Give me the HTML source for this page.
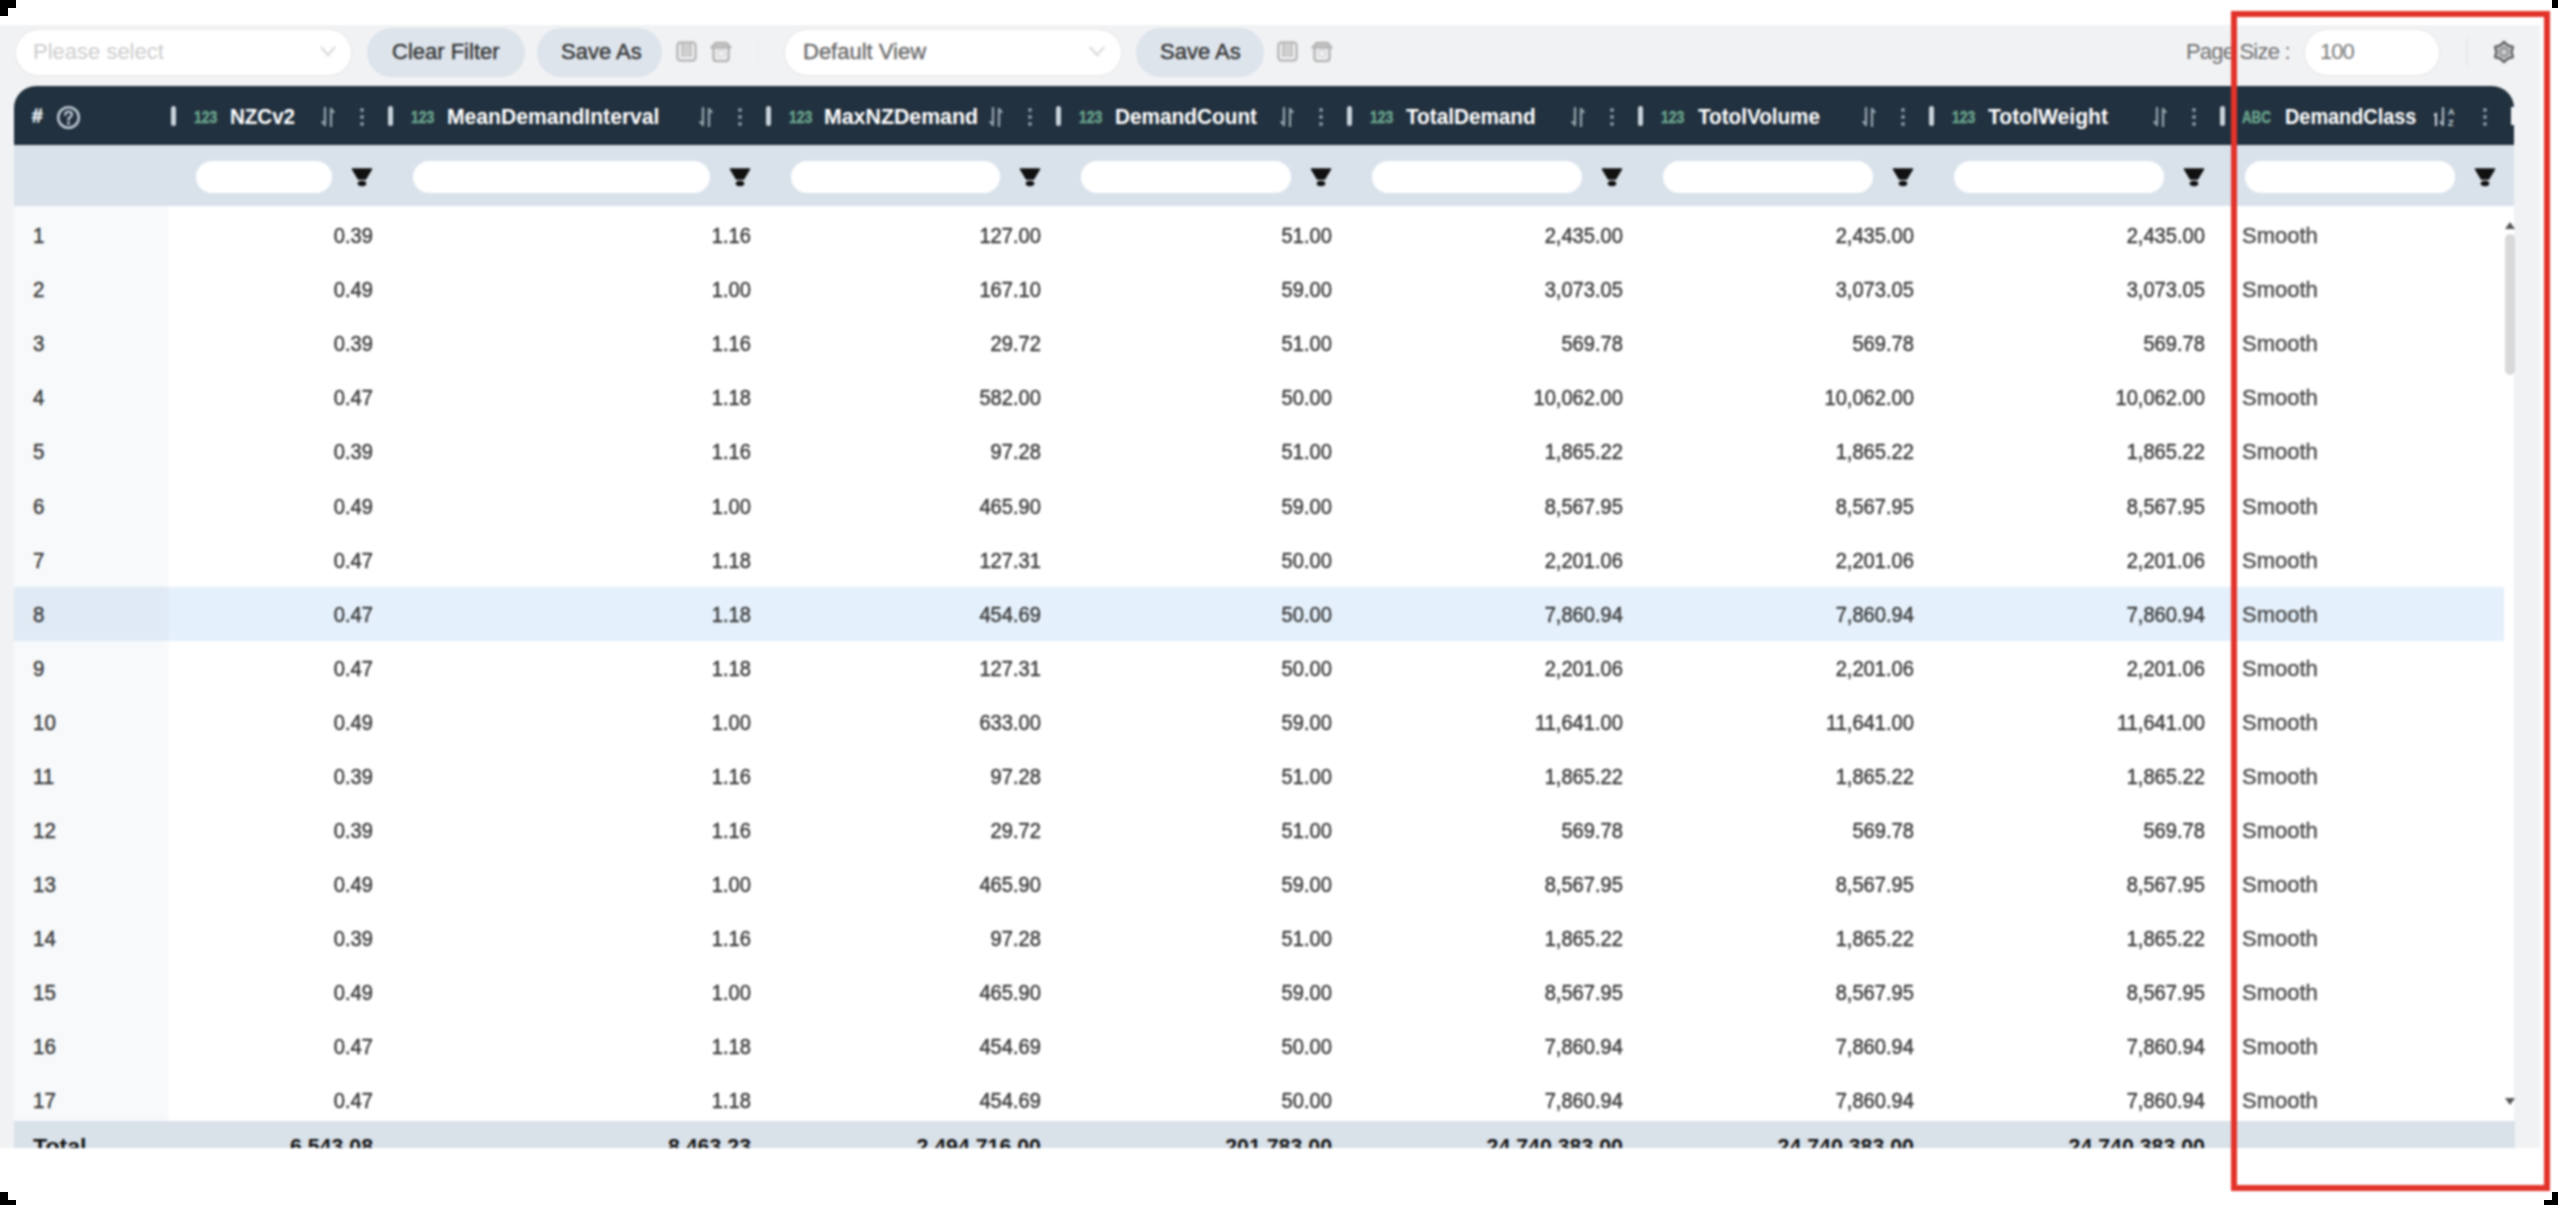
<!DOCTYPE html>
<html><head><meta charset="utf-8"><style>
html,body{margin:0;padding:0;}
body{width:2558px;height:1205px;position:relative;overflow:hidden;background:#fff;font-family:"Liberation Sans", sans-serif;}
</style></head><body>
<div id="wrap" style="position:absolute;left:0;top:0;width:2558px;height:1205px;filter:blur(0.85px);">
<div style="position:absolute;left:-10px;top:25px;width:2550px;height:1123px;background:#f1f2f4;"></div>
<div style="position:absolute;left:16px;top:30px;width:335px;height:45px;background:#fff;border-radius:23px;box-shadow:0 0 0 1.5px #ebebeb;"></div>
<div style="position:absolute;left:33px;top:41px;font-size:22px;line-height:22px;font-weight:400;color:#cdcdcd;white-space:nowrap;">Please select</div>
<svg style="position:absolute;left:318px;top:43px" width="20" height="16" viewBox="0 0 20 16"><path d="M3 4 L10 12 L17 4" fill="none" stroke="#dedede" stroke-width="2.5"/></svg>
<div style="position:absolute;left:367px;top:28px;width:158px;height:49px;background:#dde4ec;border-radius:25px;"></div>
<div style="position:absolute;left:392px;top:41px;font-size:22px;line-height:22px;font-weight:400;color:#333;white-space:nowrap;-webkit-text-stroke:0.4px #333;">Clear Filter</div>
<div style="position:absolute;left:537px;top:28px;width:125px;height:49px;background:#dde4ec;border-radius:25px;"></div>
<div style="position:absolute;left:561px;top:41px;font-size:22px;line-height:22px;font-weight:400;color:#333;white-space:nowrap;-webkit-text-stroke:0.4px #333;">Save As</div>
<svg style="position:absolute;left:676px;top:41px" width="22" height="22" viewBox="0 0 22 22"><rect x="1.5" y="1.5" width="18" height="18" rx="3" fill="none" stroke="#b9b9b9" stroke-width="2.5"/><rect x="6" y="3" width="9" height="13" fill="#cfcfcf"/><path d="M6 2 v14 M15 2 v14" stroke="#b9b9b9" stroke-width="1.5"/></svg>
<svg style="position:absolute;left:710px;top:41px" width="22" height="22" viewBox="0 0 22 22"><path d="M1.5 6.5 L5.5 2 H16.5 L20.5 6.5 Z" fill="#c9c9c9" stroke="#b5b5b5" stroke-width="2.3" stroke-linejoin="round"/><path d="M3.5 6.5 V17 Q3.5 20 6.5 20 H15.5 Q18.5 20 18.5 17 V6.5" fill="none" stroke="#b5b5b5" stroke-width="2.5"/><rect x="7.5" y="9.5" width="7" height="6" rx="1" fill="none" stroke="#d4d4d4" stroke-width="1.5"/></svg>
<div style="position:absolute;left:757px;top:38px;width:2px;height:28px;background:#eceef0;"></div>
<div style="position:absolute;left:785px;top:30px;width:336px;height:45px;background:#fff;border-radius:23px;box-shadow:0 0 0 1.5px #ebebeb;"></div>
<div style="position:absolute;left:803px;top:41px;font-size:22px;line-height:22px;font-weight:400;color:#666;white-space:nowrap;-webkit-text-stroke:0.3px #666;">Default View</div>
<svg style="position:absolute;left:1087px;top:43px" width="20" height="16" viewBox="0 0 20 16"><path d="M3 4 L10 12 L17 4" fill="none" stroke="#dedede" stroke-width="2.5"/></svg>
<div style="position:absolute;left:1136px;top:28px;width:128px;height:49px;background:#dde4ec;border-radius:25px;"></div>
<div style="position:absolute;left:1160px;top:41px;font-size:22px;line-height:22px;font-weight:400;color:#333;white-space:nowrap;-webkit-text-stroke:0.4px #333;">Save As</div>
<svg style="position:absolute;left:1277px;top:41px" width="22" height="22" viewBox="0 0 22 22"><rect x="1.5" y="1.5" width="18" height="18" rx="3" fill="none" stroke="#b9b9b9" stroke-width="2.5"/><rect x="6" y="3" width="9" height="13" fill="#cfcfcf"/><path d="M6 2 v14 M15 2 v14" stroke="#b9b9b9" stroke-width="1.5"/></svg>
<svg style="position:absolute;left:1311px;top:41px" width="22" height="22" viewBox="0 0 22 22"><path d="M1.5 6.5 L5.5 2 H16.5 L20.5 6.5 Z" fill="#c9c9c9" stroke="#b5b5b5" stroke-width="2.3" stroke-linejoin="round"/><path d="M3.5 6.5 V17 Q3.5 20 6.5 20 H15.5 Q18.5 20 18.5 17 V6.5" fill="none" stroke="#b5b5b5" stroke-width="2.5"/><rect x="7.5" y="9.5" width="7" height="6" rx="1" fill="none" stroke="#d4d4d4" stroke-width="1.5"/></svg>
<div style="position:absolute;left:2186px;top:41px;font-size:22px;line-height:22px;font-weight:400;color:#707070;white-space:nowrap;letter-spacing:-0.8px;">Page Size :</div>
<div style="position:absolute;left:2305px;top:30px;width:134px;height:45px;background:#fff;border-radius:23px;box-shadow:0 0 0 1.5px #ebebeb;"></div>
<div style="position:absolute;left:2320px;top:41px;font-size:22px;line-height:22px;font-weight:400;color:#7a7a7a;white-space:nowrap;letter-spacing:-1px;">100</div>
<div style="position:absolute;left:2466px;top:38px;width:2px;height:28px;background:#e6e8ea;"></div>
<svg style="position:absolute;left:2491px;top:39px" width="26" height="26" viewBox="0 0 26 26"><path d="M13.00 2.70 L16.80 6.42 L21.92 7.85 L20.60 13.00 L21.92 18.15 L16.80 19.58 L13.00 23.30 L9.20 19.58 L4.08 18.15 L5.40 13.00 L4.08 7.85 L9.20 6.42 Z" fill="#c2c4c6" stroke="#5e6062" stroke-width="2.3" stroke-linejoin="round"/><circle cx="13" cy="13" r="4" fill="none" stroke="#8a8c8e" stroke-width="1.8"/><circle cx="13" cy="13" r="1.6" fill="#cfd1d3"/></svg>
<div style="position:absolute;left:14px;top:86px;width:2500px;height:59px;background:#22313f;border-radius:22px 22px 0 0;"></div>
<div style="position:absolute;left:14px;top:145px;width:2500px;height:61px;background:#d9e2eb;"></div>
<div style="position:absolute;left:32px;top:106px;font-size:19px;line-height:19px;font-weight:700;color:#dfe6ec;white-space:nowrap;-webkit-text-stroke:0.8px #dfe6ec;">#</div>
<svg style="position:absolute;left:56px;top:105px" width="25" height="25" viewBox="0 0 25 25"><circle cx="12.5" cy="12.5" r="10.3" fill="none" stroke="#b9c5ce" stroke-width="2.6"/><path d="M9.3 9.8 Q9.5 6.6 12.6 6.6 Q15.8 6.6 15.8 9.5 Q15.8 11.5 13.5 12.6 Q12.5 13.2 12.5 15" fill="none" stroke="#b9c5ce" stroke-width="2.4" stroke-linecap="round"/><circle cx="12.5" cy="18.3" r="1.5" fill="#b9c5ce"/></svg>
<div style="position:absolute;left:170.5px;top:106px;width:5px;height:20px;background:#c8d3db;border-radius:2.5px;"></div>
<div style="position:absolute;left:194.0px;top:109.4px;font-size:17px;line-height:17px;font-weight:700;color:#6aa58d;white-space:nowrap;transform:scaleX(0.8200);transform-origin:left top;-webkit-text-stroke:0.5px #6aa58d;">123</div>
<div style="position:absolute;left:230.0px;top:106.3px;font-size:22px;line-height:22px;font-weight:700;color:#ffffff;white-space:nowrap;transform:scaleX(0.9326);transform-origin:left top;">NZCv2</div>
<svg style="position:absolute;left:321px;top:107px" width="14" height="20" viewBox="0 0 14 20"><path d="M4 1 V17 M1.5 15 L4 18" fill="none" stroke="#95a2ac" stroke-width="2.3" stroke-linecap="round"/><path d="M10 19 V3 M12.5 5 L10 2" fill="none" stroke="#95a2ac" stroke-width="2.3" stroke-linecap="round"/></svg>
<div style="position:absolute;left:359.9px;top:108.10000000000001px;width:4.2px;height:4.2px;background:#8a98a4;border-radius:50%;"></div>
<div style="position:absolute;left:359.9px;top:115.0px;width:4.2px;height:4.2px;background:#8a98a4;border-radius:50%;"></div>
<div style="position:absolute;left:359.9px;top:121.9px;width:4.2px;height:4.2px;background:#8a98a4;border-radius:50%;"></div>
<div style="position:absolute;left:196px;top:161px;width:136px;height:32px;background:#fff;border-radius:16px;"></div>
<svg style="position:absolute;left:350.5px;top:167px" width="22" height="21" viewBox="0 0 22 21"><path d="M1.5 2 H20.5 L14.5 12 H7.5 Z" fill="#111" stroke="#111" stroke-width="1.5" stroke-linejoin="round"/><ellipse cx="11" cy="16.5" rx="4.3" ry="2.8" fill="#111"/></svg>
<div style="position:absolute;left:387.5px;top:106px;width:5px;height:20px;background:#c8d3db;border-radius:2.5px;"></div>
<div style="position:absolute;left:411.0px;top:109.4px;font-size:17px;line-height:17px;font-weight:700;color:#6aa58d;white-space:nowrap;transform:scaleX(0.8200);transform-origin:left top;-webkit-text-stroke:0.5px #6aa58d;">123</div>
<div style="position:absolute;left:446.5px;top:106.3px;font-size:22px;line-height:22px;font-weight:700;color:#ffffff;white-space:nowrap;transform:scaleX(0.9602);transform-origin:left top;">MeanDemandInterval</div>
<svg style="position:absolute;left:699px;top:107px" width="14" height="20" viewBox="0 0 14 20"><path d="M4 1 V17 M1.5 15 L4 18" fill="none" stroke="#95a2ac" stroke-width="2.3" stroke-linecap="round"/><path d="M10 19 V3 M12.5 5 L10 2" fill="none" stroke="#95a2ac" stroke-width="2.3" stroke-linecap="round"/></svg>
<div style="position:absolute;left:737.9px;top:108.10000000000001px;width:4.2px;height:4.2px;background:#8a98a4;border-radius:50%;"></div>
<div style="position:absolute;left:737.9px;top:115.0px;width:4.2px;height:4.2px;background:#8a98a4;border-radius:50%;"></div>
<div style="position:absolute;left:737.9px;top:121.9px;width:4.2px;height:4.2px;background:#8a98a4;border-radius:50%;"></div>
<div style="position:absolute;left:413px;top:161px;width:297px;height:32px;background:#fff;border-radius:16px;"></div>
<svg style="position:absolute;left:728.5px;top:167px" width="22" height="21" viewBox="0 0 22 21"><path d="M1.5 2 H20.5 L14.5 12 H7.5 Z" fill="#111" stroke="#111" stroke-width="1.5" stroke-linejoin="round"/><ellipse cx="11" cy="16.5" rx="4.3" ry="2.8" fill="#111"/></svg>
<div style="position:absolute;left:765.5px;top:106px;width:5px;height:20px;background:#c8d3db;border-radius:2.5px;"></div>
<div style="position:absolute;left:789.0px;top:109.4px;font-size:17px;line-height:17px;font-weight:700;color:#6aa58d;white-space:nowrap;transform:scaleX(0.8200);transform-origin:left top;-webkit-text-stroke:0.5px #6aa58d;">123</div>
<div style="position:absolute;left:824.0px;top:106.3px;font-size:22px;line-height:22px;font-weight:700;color:#ffffff;white-space:nowrap;transform:scaleX(0.9692);transform-origin:left top;">MaxNZDemand</div>
<svg style="position:absolute;left:989px;top:107px" width="14" height="20" viewBox="0 0 14 20"><path d="M4 1 V17 M1.5 15 L4 18" fill="none" stroke="#95a2ac" stroke-width="2.3" stroke-linecap="round"/><path d="M10 19 V3 M12.5 5 L10 2" fill="none" stroke="#95a2ac" stroke-width="2.3" stroke-linecap="round"/></svg>
<div style="position:absolute;left:1027.9px;top:108.10000000000001px;width:4.2px;height:4.2px;background:#8a98a4;border-radius:50%;"></div>
<div style="position:absolute;left:1027.9px;top:115.0px;width:4.2px;height:4.2px;background:#8a98a4;border-radius:50%;"></div>
<div style="position:absolute;left:1027.9px;top:121.9px;width:4.2px;height:4.2px;background:#8a98a4;border-radius:50%;"></div>
<div style="position:absolute;left:791px;top:161px;width:209px;height:32px;background:#fff;border-radius:16px;"></div>
<svg style="position:absolute;left:1018.5px;top:167px" width="22" height="21" viewBox="0 0 22 21"><path d="M1.5 2 H20.5 L14.5 12 H7.5 Z" fill="#111" stroke="#111" stroke-width="1.5" stroke-linejoin="round"/><ellipse cx="11" cy="16.5" rx="4.3" ry="2.8" fill="#111"/></svg>
<div style="position:absolute;left:1055.5px;top:106px;width:5px;height:20px;background:#c8d3db;border-radius:2.5px;"></div>
<div style="position:absolute;left:1079.0px;top:109.4px;font-size:17px;line-height:17px;font-weight:700;color:#6aa58d;white-space:nowrap;transform:scaleX(0.8200);transform-origin:left top;-webkit-text-stroke:0.5px #6aa58d;">123</div>
<div style="position:absolute;left:1115.0px;top:106.3px;font-size:22px;line-height:22px;font-weight:700;color:#ffffff;white-space:nowrap;transform:scaleX(0.9448);transform-origin:left top;">DemandCount</div>
<svg style="position:absolute;left:1280px;top:107px" width="14" height="20" viewBox="0 0 14 20"><path d="M4 1 V17 M1.5 15 L4 18" fill="none" stroke="#95a2ac" stroke-width="2.3" stroke-linecap="round"/><path d="M10 19 V3 M12.5 5 L10 2" fill="none" stroke="#95a2ac" stroke-width="2.3" stroke-linecap="round"/></svg>
<div style="position:absolute;left:1318.9px;top:108.10000000000001px;width:4.2px;height:4.2px;background:#8a98a4;border-radius:50%;"></div>
<div style="position:absolute;left:1318.9px;top:115.0px;width:4.2px;height:4.2px;background:#8a98a4;border-radius:50%;"></div>
<div style="position:absolute;left:1318.9px;top:121.9px;width:4.2px;height:4.2px;background:#8a98a4;border-radius:50%;"></div>
<div style="position:absolute;left:1081px;top:161px;width:210px;height:32px;background:#fff;border-radius:16px;"></div>
<svg style="position:absolute;left:1309.5px;top:167px" width="22" height="21" viewBox="0 0 22 21"><path d="M1.5 2 H20.5 L14.5 12 H7.5 Z" fill="#111" stroke="#111" stroke-width="1.5" stroke-linejoin="round"/><ellipse cx="11" cy="16.5" rx="4.3" ry="2.8" fill="#111"/></svg>
<div style="position:absolute;left:1346.5px;top:106px;width:5px;height:20px;background:#c8d3db;border-radius:2.5px;"></div>
<div style="position:absolute;left:1370.0px;top:109.4px;font-size:17px;line-height:17px;font-weight:700;color:#6aa58d;white-space:nowrap;transform:scaleX(0.8200);transform-origin:left top;-webkit-text-stroke:0.5px #6aa58d;">123</div>
<div style="position:absolute;left:1406.0px;top:106.3px;font-size:22px;line-height:22px;font-weight:700;color:#ffffff;white-space:nowrap;transform:scaleX(0.9412);transform-origin:left top;">TotalDemand</div>
<svg style="position:absolute;left:1571px;top:107px" width="14" height="20" viewBox="0 0 14 20"><path d="M4 1 V17 M1.5 15 L4 18" fill="none" stroke="#95a2ac" stroke-width="2.3" stroke-linecap="round"/><path d="M10 19 V3 M12.5 5 L10 2" fill="none" stroke="#95a2ac" stroke-width="2.3" stroke-linecap="round"/></svg>
<div style="position:absolute;left:1609.9px;top:108.10000000000001px;width:4.2px;height:4.2px;background:#8a98a4;border-radius:50%;"></div>
<div style="position:absolute;left:1609.9px;top:115.0px;width:4.2px;height:4.2px;background:#8a98a4;border-radius:50%;"></div>
<div style="position:absolute;left:1609.9px;top:121.9px;width:4.2px;height:4.2px;background:#8a98a4;border-radius:50%;"></div>
<div style="position:absolute;left:1372px;top:161px;width:210px;height:32px;background:#fff;border-radius:16px;"></div>
<svg style="position:absolute;left:1600.5px;top:167px" width="22" height="21" viewBox="0 0 22 21"><path d="M1.5 2 H20.5 L14.5 12 H7.5 Z" fill="#111" stroke="#111" stroke-width="1.5" stroke-linejoin="round"/><ellipse cx="11" cy="16.5" rx="4.3" ry="2.8" fill="#111"/></svg>
<div style="position:absolute;left:1637.5px;top:106px;width:5px;height:20px;background:#c8d3db;border-radius:2.5px;"></div>
<div style="position:absolute;left:1661.0px;top:109.4px;font-size:17px;line-height:17px;font-weight:700;color:#6aa58d;white-space:nowrap;transform:scaleX(0.8200);transform-origin:left top;-webkit-text-stroke:0.5px #6aa58d;">123</div>
<div style="position:absolute;left:1698.0px;top:106.3px;font-size:22px;line-height:22px;font-weight:700;color:#ffffff;white-space:nowrap;transform:scaleX(0.9385);transform-origin:left top;">TotolVolume</div>
<svg style="position:absolute;left:1862px;top:107px" width="14" height="20" viewBox="0 0 14 20"><path d="M4 1 V17 M1.5 15 L4 18" fill="none" stroke="#95a2ac" stroke-width="2.3" stroke-linecap="round"/><path d="M10 19 V3 M12.5 5 L10 2" fill="none" stroke="#95a2ac" stroke-width="2.3" stroke-linecap="round"/></svg>
<div style="position:absolute;left:1900.9px;top:108.10000000000001px;width:4.2px;height:4.2px;background:#8a98a4;border-radius:50%;"></div>
<div style="position:absolute;left:1900.9px;top:115.0px;width:4.2px;height:4.2px;background:#8a98a4;border-radius:50%;"></div>
<div style="position:absolute;left:1900.9px;top:121.9px;width:4.2px;height:4.2px;background:#8a98a4;border-radius:50%;"></div>
<div style="position:absolute;left:1663px;top:161px;width:210px;height:32px;background:#fff;border-radius:16px;"></div>
<svg style="position:absolute;left:1891.5px;top:167px" width="22" height="21" viewBox="0 0 22 21"><path d="M1.5 2 H20.5 L14.5 12 H7.5 Z" fill="#111" stroke="#111" stroke-width="1.5" stroke-linejoin="round"/><ellipse cx="11" cy="16.5" rx="4.3" ry="2.8" fill="#111"/></svg>
<div style="position:absolute;left:1928.5px;top:106px;width:5px;height:20px;background:#c8d3db;border-radius:2.5px;"></div>
<div style="position:absolute;left:1952.0px;top:109.4px;font-size:17px;line-height:17px;font-weight:700;color:#6aa58d;white-space:nowrap;transform:scaleX(0.8200);transform-origin:left top;-webkit-text-stroke:0.5px #6aa58d;">123</div>
<div style="position:absolute;left:1987.5px;top:106.3px;font-size:22px;line-height:22px;font-weight:700;color:#ffffff;white-space:nowrap;transform:scaleX(0.9600);transform-origin:left top;">TotolWeight</div>
<svg style="position:absolute;left:2153px;top:107px" width="14" height="20" viewBox="0 0 14 20"><path d="M4 1 V17 M1.5 15 L4 18" fill="none" stroke="#95a2ac" stroke-width="2.3" stroke-linecap="round"/><path d="M10 19 V3 M12.5 5 L10 2" fill="none" stroke="#95a2ac" stroke-width="2.3" stroke-linecap="round"/></svg>
<div style="position:absolute;left:2191.9px;top:108.10000000000001px;width:4.2px;height:4.2px;background:#8a98a4;border-radius:50%;"></div>
<div style="position:absolute;left:2191.9px;top:115.0px;width:4.2px;height:4.2px;background:#8a98a4;border-radius:50%;"></div>
<div style="position:absolute;left:2191.9px;top:121.9px;width:4.2px;height:4.2px;background:#8a98a4;border-radius:50%;"></div>
<div style="position:absolute;left:1954px;top:161px;width:210px;height:32px;background:#fff;border-radius:16px;"></div>
<svg style="position:absolute;left:2182.5px;top:167px" width="22" height="21" viewBox="0 0 22 21"><path d="M1.5 2 H20.5 L14.5 12 H7.5 Z" fill="#111" stroke="#111" stroke-width="1.5" stroke-linejoin="round"/><ellipse cx="11" cy="16.5" rx="4.3" ry="2.8" fill="#111"/></svg>
<div style="position:absolute;left:2219.5px;top:106px;width:5px;height:20px;background:#c8d3db;border-radius:2.5px;"></div>
<div style="position:absolute;left:2242.0px;top:109.4px;font-size:17px;line-height:17px;font-weight:700;color:#6aa58d;white-space:nowrap;transform:scaleX(0.7800);transform-origin:left top;-webkit-text-stroke:0.5px #6aa58d;">ABC</div>
<div style="position:absolute;left:2285.0px;top:106.3px;font-size:22px;line-height:22px;font-weight:700;color:#ffffff;white-space:nowrap;transform:scaleX(0.9024);transform-origin:left top;">DemandClass</div>
<svg style="position:absolute;left:2431px;top:105px" width="30" height="24" viewBox="0 0 30 24"><path d="M3 10 L5 9 V21" fill="none" stroke="#cfd8df" stroke-width="2"/><path d="M12 3 V19 M9.5 17 L12 20" fill="none" stroke="#aab5be" stroke-width="2.2" stroke-linecap="round"/><text x="17" y="10" font-family="Liberation Sans" font-size="9" font-weight="700" fill="#cfd8df">A</text><text x="17" y="21" font-family="Liberation Sans" font-size="9" font-weight="700" fill="#cfd8df">Z</text></svg>
<div style="position:absolute;left:2482.9px;top:108.10000000000001px;width:4.2px;height:4.2px;background:#8a98a4;border-radius:50%;"></div>
<div style="position:absolute;left:2482.9px;top:115.0px;width:4.2px;height:4.2px;background:#8a98a4;border-radius:50%;"></div>
<div style="position:absolute;left:2482.9px;top:121.9px;width:4.2px;height:4.2px;background:#8a98a4;border-radius:50%;"></div>
<div style="position:absolute;left:2245px;top:161px;width:210px;height:32px;background:#fff;border-radius:16px;"></div>
<svg style="position:absolute;left:2473.5px;top:167px" width="22" height="21" viewBox="0 0 22 21"><path d="M1.5 2 H20.5 L14.5 12 H7.5 Z" fill="#111" stroke="#111" stroke-width="1.5" stroke-linejoin="round"/><ellipse cx="11" cy="16.5" rx="4.3" ry="2.8" fill="#111"/></svg>
<div style="position:absolute;left:2511px;top:107px;width:4px;height:18px;background:#f1f2f4;"></div>
<div style="position:absolute;left:14px;top:206px;width:2500px;height:915px;background:#fff;"></div>
<div style="position:absolute;left:14px;top:206px;width:154px;height:915px;background:#f7f9fb;"></div>
<div style="position:absolute;left:14px;top:587.2px;width:2490px;height:54px;background:#e4f0fb;"></div>
<div style="position:absolute;left:14px;top:587.2px;width:154px;height:54px;background:#dfeaf5;"></div>
<div style="position:absolute;left:33.0px;top:225.2px;font-size:22px;line-height:22px;font-weight:400;color:#3a3a3a;white-space:nowrap;transform:scaleX(0.9300);transform-origin:left top;-webkit-text-stroke:0.45px #3a3a3a;">1</div>
<div style="position:absolute;left:-227.0px;width:600px;text-align:right;top:225.2px;font-size:22px;line-height:22px;font-weight:400;color:#3a3a3a;white-space:nowrap;transform:scaleX(0.9150);transform-origin:right top;-webkit-text-stroke:0.45px #3a3a3a;">0.39</div>
<div style="position:absolute;left:151.0px;width:600px;text-align:right;top:225.2px;font-size:22px;line-height:22px;font-weight:400;color:#3a3a3a;white-space:nowrap;transform:scaleX(0.9150);transform-origin:right top;-webkit-text-stroke:0.45px #3a3a3a;">1.16</div>
<div style="position:absolute;left:441.0px;width:600px;text-align:right;top:225.2px;font-size:22px;line-height:22px;font-weight:400;color:#3a3a3a;white-space:nowrap;transform:scaleX(0.9150);transform-origin:right top;-webkit-text-stroke:0.45px #3a3a3a;">127.00</div>
<div style="position:absolute;left:732.0px;width:600px;text-align:right;top:225.2px;font-size:22px;line-height:22px;font-weight:400;color:#3a3a3a;white-space:nowrap;transform:scaleX(0.9150);transform-origin:right top;-webkit-text-stroke:0.45px #3a3a3a;">51.00</div>
<div style="position:absolute;left:1023.0px;width:600px;text-align:right;top:225.2px;font-size:22px;line-height:22px;font-weight:400;color:#3a3a3a;white-space:nowrap;transform:scaleX(0.9150);transform-origin:right top;-webkit-text-stroke:0.45px #3a3a3a;">2,435.00</div>
<div style="position:absolute;left:1314.0px;width:600px;text-align:right;top:225.2px;font-size:22px;line-height:22px;font-weight:400;color:#3a3a3a;white-space:nowrap;transform:scaleX(0.9150);transform-origin:right top;-webkit-text-stroke:0.45px #3a3a3a;">2,435.00</div>
<div style="position:absolute;left:1605.0px;width:600px;text-align:right;top:225.2px;font-size:22px;line-height:22px;font-weight:400;color:#3a3a3a;white-space:nowrap;transform:scaleX(0.9150);transform-origin:right top;-webkit-text-stroke:0.45px #3a3a3a;">2,435.00</div>
<div style="position:absolute;left:2242.0px;top:225.2px;font-size:22px;line-height:22px;font-weight:400;color:#4a4a4a;white-space:nowrap;transform:scaleX(1.0000);transform-origin:left top;-webkit-text-stroke:0.4px #4a4a4a;">Smooth</div>
<div style="position:absolute;left:33.0px;top:279.2px;font-size:22px;line-height:22px;font-weight:400;color:#3a3a3a;white-space:nowrap;transform:scaleX(0.9300);transform-origin:left top;-webkit-text-stroke:0.45px #3a3a3a;">2</div>
<div style="position:absolute;left:-227.0px;width:600px;text-align:right;top:279.2px;font-size:22px;line-height:22px;font-weight:400;color:#3a3a3a;white-space:nowrap;transform:scaleX(0.9150);transform-origin:right top;-webkit-text-stroke:0.45px #3a3a3a;">0.49</div>
<div style="position:absolute;left:151.0px;width:600px;text-align:right;top:279.2px;font-size:22px;line-height:22px;font-weight:400;color:#3a3a3a;white-space:nowrap;transform:scaleX(0.9150);transform-origin:right top;-webkit-text-stroke:0.45px #3a3a3a;">1.00</div>
<div style="position:absolute;left:441.0px;width:600px;text-align:right;top:279.2px;font-size:22px;line-height:22px;font-weight:400;color:#3a3a3a;white-space:nowrap;transform:scaleX(0.9150);transform-origin:right top;-webkit-text-stroke:0.45px #3a3a3a;">167.10</div>
<div style="position:absolute;left:732.0px;width:600px;text-align:right;top:279.2px;font-size:22px;line-height:22px;font-weight:400;color:#3a3a3a;white-space:nowrap;transform:scaleX(0.9150);transform-origin:right top;-webkit-text-stroke:0.45px #3a3a3a;">59.00</div>
<div style="position:absolute;left:1023.0px;width:600px;text-align:right;top:279.2px;font-size:22px;line-height:22px;font-weight:400;color:#3a3a3a;white-space:nowrap;transform:scaleX(0.9150);transform-origin:right top;-webkit-text-stroke:0.45px #3a3a3a;">3,073.05</div>
<div style="position:absolute;left:1314.0px;width:600px;text-align:right;top:279.2px;font-size:22px;line-height:22px;font-weight:400;color:#3a3a3a;white-space:nowrap;transform:scaleX(0.9150);transform-origin:right top;-webkit-text-stroke:0.45px #3a3a3a;">3,073.05</div>
<div style="position:absolute;left:1605.0px;width:600px;text-align:right;top:279.2px;font-size:22px;line-height:22px;font-weight:400;color:#3a3a3a;white-space:nowrap;transform:scaleX(0.9150);transform-origin:right top;-webkit-text-stroke:0.45px #3a3a3a;">3,073.05</div>
<div style="position:absolute;left:2242.0px;top:279.2px;font-size:22px;line-height:22px;font-weight:400;color:#4a4a4a;white-space:nowrap;transform:scaleX(1.0000);transform-origin:left top;-webkit-text-stroke:0.4px #4a4a4a;">Smooth</div>
<div style="position:absolute;left:33.0px;top:333.3px;font-size:22px;line-height:22px;font-weight:400;color:#3a3a3a;white-space:nowrap;transform:scaleX(0.9300);transform-origin:left top;-webkit-text-stroke:0.45px #3a3a3a;">3</div>
<div style="position:absolute;left:-227.0px;width:600px;text-align:right;top:333.3px;font-size:22px;line-height:22px;font-weight:400;color:#3a3a3a;white-space:nowrap;transform:scaleX(0.9150);transform-origin:right top;-webkit-text-stroke:0.45px #3a3a3a;">0.39</div>
<div style="position:absolute;left:151.0px;width:600px;text-align:right;top:333.3px;font-size:22px;line-height:22px;font-weight:400;color:#3a3a3a;white-space:nowrap;transform:scaleX(0.9150);transform-origin:right top;-webkit-text-stroke:0.45px #3a3a3a;">1.16</div>
<div style="position:absolute;left:441.0px;width:600px;text-align:right;top:333.3px;font-size:22px;line-height:22px;font-weight:400;color:#3a3a3a;white-space:nowrap;transform:scaleX(0.9150);transform-origin:right top;-webkit-text-stroke:0.45px #3a3a3a;">29.72</div>
<div style="position:absolute;left:732.0px;width:600px;text-align:right;top:333.3px;font-size:22px;line-height:22px;font-weight:400;color:#3a3a3a;white-space:nowrap;transform:scaleX(0.9150);transform-origin:right top;-webkit-text-stroke:0.45px #3a3a3a;">51.00</div>
<div style="position:absolute;left:1023.0px;width:600px;text-align:right;top:333.3px;font-size:22px;line-height:22px;font-weight:400;color:#3a3a3a;white-space:nowrap;transform:scaleX(0.9150);transform-origin:right top;-webkit-text-stroke:0.45px #3a3a3a;">569.78</div>
<div style="position:absolute;left:1314.0px;width:600px;text-align:right;top:333.3px;font-size:22px;line-height:22px;font-weight:400;color:#3a3a3a;white-space:nowrap;transform:scaleX(0.9150);transform-origin:right top;-webkit-text-stroke:0.45px #3a3a3a;">569.78</div>
<div style="position:absolute;left:1605.0px;width:600px;text-align:right;top:333.3px;font-size:22px;line-height:22px;font-weight:400;color:#3a3a3a;white-space:nowrap;transform:scaleX(0.9150);transform-origin:right top;-webkit-text-stroke:0.45px #3a3a3a;">569.78</div>
<div style="position:absolute;left:2242.0px;top:333.3px;font-size:22px;line-height:22px;font-weight:400;color:#4a4a4a;white-space:nowrap;transform:scaleX(1.0000);transform-origin:left top;-webkit-text-stroke:0.4px #4a4a4a;">Smooth</div>
<div style="position:absolute;left:33.0px;top:387.4px;font-size:22px;line-height:22px;font-weight:400;color:#3a3a3a;white-space:nowrap;transform:scaleX(0.9300);transform-origin:left top;-webkit-text-stroke:0.45px #3a3a3a;">4</div>
<div style="position:absolute;left:-227.0px;width:600px;text-align:right;top:387.4px;font-size:22px;line-height:22px;font-weight:400;color:#3a3a3a;white-space:nowrap;transform:scaleX(0.9150);transform-origin:right top;-webkit-text-stroke:0.45px #3a3a3a;">0.47</div>
<div style="position:absolute;left:151.0px;width:600px;text-align:right;top:387.4px;font-size:22px;line-height:22px;font-weight:400;color:#3a3a3a;white-space:nowrap;transform:scaleX(0.9150);transform-origin:right top;-webkit-text-stroke:0.45px #3a3a3a;">1.18</div>
<div style="position:absolute;left:441.0px;width:600px;text-align:right;top:387.4px;font-size:22px;line-height:22px;font-weight:400;color:#3a3a3a;white-space:nowrap;transform:scaleX(0.9150);transform-origin:right top;-webkit-text-stroke:0.45px #3a3a3a;">582.00</div>
<div style="position:absolute;left:732.0px;width:600px;text-align:right;top:387.4px;font-size:22px;line-height:22px;font-weight:400;color:#3a3a3a;white-space:nowrap;transform:scaleX(0.9150);transform-origin:right top;-webkit-text-stroke:0.45px #3a3a3a;">50.00</div>
<div style="position:absolute;left:1023.0px;width:600px;text-align:right;top:387.4px;font-size:22px;line-height:22px;font-weight:400;color:#3a3a3a;white-space:nowrap;transform:scaleX(0.9150);transform-origin:right top;-webkit-text-stroke:0.45px #3a3a3a;">10,062.00</div>
<div style="position:absolute;left:1314.0px;width:600px;text-align:right;top:387.4px;font-size:22px;line-height:22px;font-weight:400;color:#3a3a3a;white-space:nowrap;transform:scaleX(0.9150);transform-origin:right top;-webkit-text-stroke:0.45px #3a3a3a;">10,062.00</div>
<div style="position:absolute;left:1605.0px;width:600px;text-align:right;top:387.4px;font-size:22px;line-height:22px;font-weight:400;color:#3a3a3a;white-space:nowrap;transform:scaleX(0.9150);transform-origin:right top;-webkit-text-stroke:0.45px #3a3a3a;">10,062.00</div>
<div style="position:absolute;left:2242.0px;top:387.4px;font-size:22px;line-height:22px;font-weight:400;color:#4a4a4a;white-space:nowrap;transform:scaleX(1.0000);transform-origin:left top;-webkit-text-stroke:0.4px #4a4a4a;">Smooth</div>
<div style="position:absolute;left:33.0px;top:441.4px;font-size:22px;line-height:22px;font-weight:400;color:#3a3a3a;white-space:nowrap;transform:scaleX(0.9300);transform-origin:left top;-webkit-text-stroke:0.45px #3a3a3a;">5</div>
<div style="position:absolute;left:-227.0px;width:600px;text-align:right;top:441.4px;font-size:22px;line-height:22px;font-weight:400;color:#3a3a3a;white-space:nowrap;transform:scaleX(0.9150);transform-origin:right top;-webkit-text-stroke:0.45px #3a3a3a;">0.39</div>
<div style="position:absolute;left:151.0px;width:600px;text-align:right;top:441.4px;font-size:22px;line-height:22px;font-weight:400;color:#3a3a3a;white-space:nowrap;transform:scaleX(0.9150);transform-origin:right top;-webkit-text-stroke:0.45px #3a3a3a;">1.16</div>
<div style="position:absolute;left:441.0px;width:600px;text-align:right;top:441.4px;font-size:22px;line-height:22px;font-weight:400;color:#3a3a3a;white-space:nowrap;transform:scaleX(0.9150);transform-origin:right top;-webkit-text-stroke:0.45px #3a3a3a;">97.28</div>
<div style="position:absolute;left:732.0px;width:600px;text-align:right;top:441.4px;font-size:22px;line-height:22px;font-weight:400;color:#3a3a3a;white-space:nowrap;transform:scaleX(0.9150);transform-origin:right top;-webkit-text-stroke:0.45px #3a3a3a;">51.00</div>
<div style="position:absolute;left:1023.0px;width:600px;text-align:right;top:441.4px;font-size:22px;line-height:22px;font-weight:400;color:#3a3a3a;white-space:nowrap;transform:scaleX(0.9150);transform-origin:right top;-webkit-text-stroke:0.45px #3a3a3a;">1,865.22</div>
<div style="position:absolute;left:1314.0px;width:600px;text-align:right;top:441.4px;font-size:22px;line-height:22px;font-weight:400;color:#3a3a3a;white-space:nowrap;transform:scaleX(0.9150);transform-origin:right top;-webkit-text-stroke:0.45px #3a3a3a;">1,865.22</div>
<div style="position:absolute;left:1605.0px;width:600px;text-align:right;top:441.4px;font-size:22px;line-height:22px;font-weight:400;color:#3a3a3a;white-space:nowrap;transform:scaleX(0.9150);transform-origin:right top;-webkit-text-stroke:0.45px #3a3a3a;">1,865.22</div>
<div style="position:absolute;left:2242.0px;top:441.4px;font-size:22px;line-height:22px;font-weight:400;color:#4a4a4a;white-space:nowrap;transform:scaleX(1.0000);transform-origin:left top;-webkit-text-stroke:0.4px #4a4a4a;">Smooth</div>
<div style="position:absolute;left:33.0px;top:495.5px;font-size:22px;line-height:22px;font-weight:400;color:#3a3a3a;white-space:nowrap;transform:scaleX(0.9300);transform-origin:left top;-webkit-text-stroke:0.45px #3a3a3a;">6</div>
<div style="position:absolute;left:-227.0px;width:600px;text-align:right;top:495.5px;font-size:22px;line-height:22px;font-weight:400;color:#3a3a3a;white-space:nowrap;transform:scaleX(0.9150);transform-origin:right top;-webkit-text-stroke:0.45px #3a3a3a;">0.49</div>
<div style="position:absolute;left:151.0px;width:600px;text-align:right;top:495.5px;font-size:22px;line-height:22px;font-weight:400;color:#3a3a3a;white-space:nowrap;transform:scaleX(0.9150);transform-origin:right top;-webkit-text-stroke:0.45px #3a3a3a;">1.00</div>
<div style="position:absolute;left:441.0px;width:600px;text-align:right;top:495.5px;font-size:22px;line-height:22px;font-weight:400;color:#3a3a3a;white-space:nowrap;transform:scaleX(0.9150);transform-origin:right top;-webkit-text-stroke:0.45px #3a3a3a;">465.90</div>
<div style="position:absolute;left:732.0px;width:600px;text-align:right;top:495.5px;font-size:22px;line-height:22px;font-weight:400;color:#3a3a3a;white-space:nowrap;transform:scaleX(0.9150);transform-origin:right top;-webkit-text-stroke:0.45px #3a3a3a;">59.00</div>
<div style="position:absolute;left:1023.0px;width:600px;text-align:right;top:495.5px;font-size:22px;line-height:22px;font-weight:400;color:#3a3a3a;white-space:nowrap;transform:scaleX(0.9150);transform-origin:right top;-webkit-text-stroke:0.45px #3a3a3a;">8,567.95</div>
<div style="position:absolute;left:1314.0px;width:600px;text-align:right;top:495.5px;font-size:22px;line-height:22px;font-weight:400;color:#3a3a3a;white-space:nowrap;transform:scaleX(0.9150);transform-origin:right top;-webkit-text-stroke:0.45px #3a3a3a;">8,567.95</div>
<div style="position:absolute;left:1605.0px;width:600px;text-align:right;top:495.5px;font-size:22px;line-height:22px;font-weight:400;color:#3a3a3a;white-space:nowrap;transform:scaleX(0.9150);transform-origin:right top;-webkit-text-stroke:0.45px #3a3a3a;">8,567.95</div>
<div style="position:absolute;left:2242.0px;top:495.5px;font-size:22px;line-height:22px;font-weight:400;color:#4a4a4a;white-space:nowrap;transform:scaleX(1.0000);transform-origin:left top;-webkit-text-stroke:0.4px #4a4a4a;">Smooth</div>
<div style="position:absolute;left:33.0px;top:549.5px;font-size:22px;line-height:22px;font-weight:400;color:#3a3a3a;white-space:nowrap;transform:scaleX(0.9300);transform-origin:left top;-webkit-text-stroke:0.45px #3a3a3a;">7</div>
<div style="position:absolute;left:-227.0px;width:600px;text-align:right;top:549.5px;font-size:22px;line-height:22px;font-weight:400;color:#3a3a3a;white-space:nowrap;transform:scaleX(0.9150);transform-origin:right top;-webkit-text-stroke:0.45px #3a3a3a;">0.47</div>
<div style="position:absolute;left:151.0px;width:600px;text-align:right;top:549.5px;font-size:22px;line-height:22px;font-weight:400;color:#3a3a3a;white-space:nowrap;transform:scaleX(0.9150);transform-origin:right top;-webkit-text-stroke:0.45px #3a3a3a;">1.18</div>
<div style="position:absolute;left:441.0px;width:600px;text-align:right;top:549.5px;font-size:22px;line-height:22px;font-weight:400;color:#3a3a3a;white-space:nowrap;transform:scaleX(0.9150);transform-origin:right top;-webkit-text-stroke:0.45px #3a3a3a;">127.31</div>
<div style="position:absolute;left:732.0px;width:600px;text-align:right;top:549.5px;font-size:22px;line-height:22px;font-weight:400;color:#3a3a3a;white-space:nowrap;transform:scaleX(0.9150);transform-origin:right top;-webkit-text-stroke:0.45px #3a3a3a;">50.00</div>
<div style="position:absolute;left:1023.0px;width:600px;text-align:right;top:549.5px;font-size:22px;line-height:22px;font-weight:400;color:#3a3a3a;white-space:nowrap;transform:scaleX(0.9150);transform-origin:right top;-webkit-text-stroke:0.45px #3a3a3a;">2,201.06</div>
<div style="position:absolute;left:1314.0px;width:600px;text-align:right;top:549.5px;font-size:22px;line-height:22px;font-weight:400;color:#3a3a3a;white-space:nowrap;transform:scaleX(0.9150);transform-origin:right top;-webkit-text-stroke:0.45px #3a3a3a;">2,201.06</div>
<div style="position:absolute;left:1605.0px;width:600px;text-align:right;top:549.5px;font-size:22px;line-height:22px;font-weight:400;color:#3a3a3a;white-space:nowrap;transform:scaleX(0.9150);transform-origin:right top;-webkit-text-stroke:0.45px #3a3a3a;">2,201.06</div>
<div style="position:absolute;left:2242.0px;top:549.5px;font-size:22px;line-height:22px;font-weight:400;color:#4a4a4a;white-space:nowrap;transform:scaleX(1.0000);transform-origin:left top;-webkit-text-stroke:0.4px #4a4a4a;">Smooth</div>
<div style="position:absolute;left:33.0px;top:603.6px;font-size:22px;line-height:22px;font-weight:400;color:#3a3a3a;white-space:nowrap;transform:scaleX(0.9300);transform-origin:left top;-webkit-text-stroke:0.45px #3a3a3a;">8</div>
<div style="position:absolute;left:-227.0px;width:600px;text-align:right;top:603.6px;font-size:22px;line-height:22px;font-weight:400;color:#3a3a3a;white-space:nowrap;transform:scaleX(0.9150);transform-origin:right top;-webkit-text-stroke:0.45px #3a3a3a;">0.47</div>
<div style="position:absolute;left:151.0px;width:600px;text-align:right;top:603.6px;font-size:22px;line-height:22px;font-weight:400;color:#3a3a3a;white-space:nowrap;transform:scaleX(0.9150);transform-origin:right top;-webkit-text-stroke:0.45px #3a3a3a;">1.18</div>
<div style="position:absolute;left:441.0px;width:600px;text-align:right;top:603.6px;font-size:22px;line-height:22px;font-weight:400;color:#3a3a3a;white-space:nowrap;transform:scaleX(0.9150);transform-origin:right top;-webkit-text-stroke:0.45px #3a3a3a;">454.69</div>
<div style="position:absolute;left:732.0px;width:600px;text-align:right;top:603.6px;font-size:22px;line-height:22px;font-weight:400;color:#3a3a3a;white-space:nowrap;transform:scaleX(0.9150);transform-origin:right top;-webkit-text-stroke:0.45px #3a3a3a;">50.00</div>
<div style="position:absolute;left:1023.0px;width:600px;text-align:right;top:603.6px;font-size:22px;line-height:22px;font-weight:400;color:#3a3a3a;white-space:nowrap;transform:scaleX(0.9150);transform-origin:right top;-webkit-text-stroke:0.45px #3a3a3a;">7,860.94</div>
<div style="position:absolute;left:1314.0px;width:600px;text-align:right;top:603.6px;font-size:22px;line-height:22px;font-weight:400;color:#3a3a3a;white-space:nowrap;transform:scaleX(0.9150);transform-origin:right top;-webkit-text-stroke:0.45px #3a3a3a;">7,860.94</div>
<div style="position:absolute;left:1605.0px;width:600px;text-align:right;top:603.6px;font-size:22px;line-height:22px;font-weight:400;color:#3a3a3a;white-space:nowrap;transform:scaleX(0.9150);transform-origin:right top;-webkit-text-stroke:0.45px #3a3a3a;">7,860.94</div>
<div style="position:absolute;left:2242.0px;top:603.6px;font-size:22px;line-height:22px;font-weight:400;color:#4a4a4a;white-space:nowrap;transform:scaleX(1.0000);transform-origin:left top;-webkit-text-stroke:0.4px #4a4a4a;">Smooth</div>
<div style="position:absolute;left:33.0px;top:657.7px;font-size:22px;line-height:22px;font-weight:400;color:#3a3a3a;white-space:nowrap;transform:scaleX(0.9300);transform-origin:left top;-webkit-text-stroke:0.45px #3a3a3a;">9</div>
<div style="position:absolute;left:-227.0px;width:600px;text-align:right;top:657.7px;font-size:22px;line-height:22px;font-weight:400;color:#3a3a3a;white-space:nowrap;transform:scaleX(0.9150);transform-origin:right top;-webkit-text-stroke:0.45px #3a3a3a;">0.47</div>
<div style="position:absolute;left:151.0px;width:600px;text-align:right;top:657.7px;font-size:22px;line-height:22px;font-weight:400;color:#3a3a3a;white-space:nowrap;transform:scaleX(0.9150);transform-origin:right top;-webkit-text-stroke:0.45px #3a3a3a;">1.18</div>
<div style="position:absolute;left:441.0px;width:600px;text-align:right;top:657.7px;font-size:22px;line-height:22px;font-weight:400;color:#3a3a3a;white-space:nowrap;transform:scaleX(0.9150);transform-origin:right top;-webkit-text-stroke:0.45px #3a3a3a;">127.31</div>
<div style="position:absolute;left:732.0px;width:600px;text-align:right;top:657.7px;font-size:22px;line-height:22px;font-weight:400;color:#3a3a3a;white-space:nowrap;transform:scaleX(0.9150);transform-origin:right top;-webkit-text-stroke:0.45px #3a3a3a;">50.00</div>
<div style="position:absolute;left:1023.0px;width:600px;text-align:right;top:657.7px;font-size:22px;line-height:22px;font-weight:400;color:#3a3a3a;white-space:nowrap;transform:scaleX(0.9150);transform-origin:right top;-webkit-text-stroke:0.45px #3a3a3a;">2,201.06</div>
<div style="position:absolute;left:1314.0px;width:600px;text-align:right;top:657.7px;font-size:22px;line-height:22px;font-weight:400;color:#3a3a3a;white-space:nowrap;transform:scaleX(0.9150);transform-origin:right top;-webkit-text-stroke:0.45px #3a3a3a;">2,201.06</div>
<div style="position:absolute;left:1605.0px;width:600px;text-align:right;top:657.7px;font-size:22px;line-height:22px;font-weight:400;color:#3a3a3a;white-space:nowrap;transform:scaleX(0.9150);transform-origin:right top;-webkit-text-stroke:0.45px #3a3a3a;">2,201.06</div>
<div style="position:absolute;left:2242.0px;top:657.7px;font-size:22px;line-height:22px;font-weight:400;color:#4a4a4a;white-space:nowrap;transform:scaleX(1.0000);transform-origin:left top;-webkit-text-stroke:0.4px #4a4a4a;">Smooth</div>
<div style="position:absolute;left:33.0px;top:711.7px;font-size:22px;line-height:22px;font-weight:400;color:#3a3a3a;white-space:nowrap;transform:scaleX(0.9300);transform-origin:left top;-webkit-text-stroke:0.45px #3a3a3a;">10</div>
<div style="position:absolute;left:-227.0px;width:600px;text-align:right;top:711.7px;font-size:22px;line-height:22px;font-weight:400;color:#3a3a3a;white-space:nowrap;transform:scaleX(0.9150);transform-origin:right top;-webkit-text-stroke:0.45px #3a3a3a;">0.49</div>
<div style="position:absolute;left:151.0px;width:600px;text-align:right;top:711.7px;font-size:22px;line-height:22px;font-weight:400;color:#3a3a3a;white-space:nowrap;transform:scaleX(0.9150);transform-origin:right top;-webkit-text-stroke:0.45px #3a3a3a;">1.00</div>
<div style="position:absolute;left:441.0px;width:600px;text-align:right;top:711.7px;font-size:22px;line-height:22px;font-weight:400;color:#3a3a3a;white-space:nowrap;transform:scaleX(0.9150);transform-origin:right top;-webkit-text-stroke:0.45px #3a3a3a;">633.00</div>
<div style="position:absolute;left:732.0px;width:600px;text-align:right;top:711.7px;font-size:22px;line-height:22px;font-weight:400;color:#3a3a3a;white-space:nowrap;transform:scaleX(0.9150);transform-origin:right top;-webkit-text-stroke:0.45px #3a3a3a;">59.00</div>
<div style="position:absolute;left:1023.0px;width:600px;text-align:right;top:711.7px;font-size:22px;line-height:22px;font-weight:400;color:#3a3a3a;white-space:nowrap;transform:scaleX(0.9150);transform-origin:right top;-webkit-text-stroke:0.45px #3a3a3a;">11,641.00</div>
<div style="position:absolute;left:1314.0px;width:600px;text-align:right;top:711.7px;font-size:22px;line-height:22px;font-weight:400;color:#3a3a3a;white-space:nowrap;transform:scaleX(0.9150);transform-origin:right top;-webkit-text-stroke:0.45px #3a3a3a;">11,641.00</div>
<div style="position:absolute;left:1605.0px;width:600px;text-align:right;top:711.7px;font-size:22px;line-height:22px;font-weight:400;color:#3a3a3a;white-space:nowrap;transform:scaleX(0.9150);transform-origin:right top;-webkit-text-stroke:0.45px #3a3a3a;">11,641.00</div>
<div style="position:absolute;left:2242.0px;top:711.7px;font-size:22px;line-height:22px;font-weight:400;color:#4a4a4a;white-space:nowrap;transform:scaleX(1.0000);transform-origin:left top;-webkit-text-stroke:0.4px #4a4a4a;">Smooth</div>
<div style="position:absolute;left:33.0px;top:765.8px;font-size:22px;line-height:22px;font-weight:400;color:#3a3a3a;white-space:nowrap;transform:scaleX(0.9300);transform-origin:left top;-webkit-text-stroke:0.45px #3a3a3a;">11</div>
<div style="position:absolute;left:-227.0px;width:600px;text-align:right;top:765.8px;font-size:22px;line-height:22px;font-weight:400;color:#3a3a3a;white-space:nowrap;transform:scaleX(0.9150);transform-origin:right top;-webkit-text-stroke:0.45px #3a3a3a;">0.39</div>
<div style="position:absolute;left:151.0px;width:600px;text-align:right;top:765.8px;font-size:22px;line-height:22px;font-weight:400;color:#3a3a3a;white-space:nowrap;transform:scaleX(0.9150);transform-origin:right top;-webkit-text-stroke:0.45px #3a3a3a;">1.16</div>
<div style="position:absolute;left:441.0px;width:600px;text-align:right;top:765.8px;font-size:22px;line-height:22px;font-weight:400;color:#3a3a3a;white-space:nowrap;transform:scaleX(0.9150);transform-origin:right top;-webkit-text-stroke:0.45px #3a3a3a;">97.28</div>
<div style="position:absolute;left:732.0px;width:600px;text-align:right;top:765.8px;font-size:22px;line-height:22px;font-weight:400;color:#3a3a3a;white-space:nowrap;transform:scaleX(0.9150);transform-origin:right top;-webkit-text-stroke:0.45px #3a3a3a;">51.00</div>
<div style="position:absolute;left:1023.0px;width:600px;text-align:right;top:765.8px;font-size:22px;line-height:22px;font-weight:400;color:#3a3a3a;white-space:nowrap;transform:scaleX(0.9150);transform-origin:right top;-webkit-text-stroke:0.45px #3a3a3a;">1,865.22</div>
<div style="position:absolute;left:1314.0px;width:600px;text-align:right;top:765.8px;font-size:22px;line-height:22px;font-weight:400;color:#3a3a3a;white-space:nowrap;transform:scaleX(0.9150);transform-origin:right top;-webkit-text-stroke:0.45px #3a3a3a;">1,865.22</div>
<div style="position:absolute;left:1605.0px;width:600px;text-align:right;top:765.8px;font-size:22px;line-height:22px;font-weight:400;color:#3a3a3a;white-space:nowrap;transform:scaleX(0.9150);transform-origin:right top;-webkit-text-stroke:0.45px #3a3a3a;">1,865.22</div>
<div style="position:absolute;left:2242.0px;top:765.8px;font-size:22px;line-height:22px;font-weight:400;color:#4a4a4a;white-space:nowrap;transform:scaleX(1.0000);transform-origin:left top;-webkit-text-stroke:0.4px #4a4a4a;">Smooth</div>
<div style="position:absolute;left:33.0px;top:819.8px;font-size:22px;line-height:22px;font-weight:400;color:#3a3a3a;white-space:nowrap;transform:scaleX(0.9300);transform-origin:left top;-webkit-text-stroke:0.45px #3a3a3a;">12</div>
<div style="position:absolute;left:-227.0px;width:600px;text-align:right;top:819.8px;font-size:22px;line-height:22px;font-weight:400;color:#3a3a3a;white-space:nowrap;transform:scaleX(0.9150);transform-origin:right top;-webkit-text-stroke:0.45px #3a3a3a;">0.39</div>
<div style="position:absolute;left:151.0px;width:600px;text-align:right;top:819.8px;font-size:22px;line-height:22px;font-weight:400;color:#3a3a3a;white-space:nowrap;transform:scaleX(0.9150);transform-origin:right top;-webkit-text-stroke:0.45px #3a3a3a;">1.16</div>
<div style="position:absolute;left:441.0px;width:600px;text-align:right;top:819.8px;font-size:22px;line-height:22px;font-weight:400;color:#3a3a3a;white-space:nowrap;transform:scaleX(0.9150);transform-origin:right top;-webkit-text-stroke:0.45px #3a3a3a;">29.72</div>
<div style="position:absolute;left:732.0px;width:600px;text-align:right;top:819.8px;font-size:22px;line-height:22px;font-weight:400;color:#3a3a3a;white-space:nowrap;transform:scaleX(0.9150);transform-origin:right top;-webkit-text-stroke:0.45px #3a3a3a;">51.00</div>
<div style="position:absolute;left:1023.0px;width:600px;text-align:right;top:819.8px;font-size:22px;line-height:22px;font-weight:400;color:#3a3a3a;white-space:nowrap;transform:scaleX(0.9150);transform-origin:right top;-webkit-text-stroke:0.45px #3a3a3a;">569.78</div>
<div style="position:absolute;left:1314.0px;width:600px;text-align:right;top:819.8px;font-size:22px;line-height:22px;font-weight:400;color:#3a3a3a;white-space:nowrap;transform:scaleX(0.9150);transform-origin:right top;-webkit-text-stroke:0.45px #3a3a3a;">569.78</div>
<div style="position:absolute;left:1605.0px;width:600px;text-align:right;top:819.8px;font-size:22px;line-height:22px;font-weight:400;color:#3a3a3a;white-space:nowrap;transform:scaleX(0.9150);transform-origin:right top;-webkit-text-stroke:0.45px #3a3a3a;">569.78</div>
<div style="position:absolute;left:2242.0px;top:819.8px;font-size:22px;line-height:22px;font-weight:400;color:#4a4a4a;white-space:nowrap;transform:scaleX(1.0000);transform-origin:left top;-webkit-text-stroke:0.4px #4a4a4a;">Smooth</div>
<div style="position:absolute;left:33.0px;top:873.9px;font-size:22px;line-height:22px;font-weight:400;color:#3a3a3a;white-space:nowrap;transform:scaleX(0.9300);transform-origin:left top;-webkit-text-stroke:0.45px #3a3a3a;">13</div>
<div style="position:absolute;left:-227.0px;width:600px;text-align:right;top:873.9px;font-size:22px;line-height:22px;font-weight:400;color:#3a3a3a;white-space:nowrap;transform:scaleX(0.9150);transform-origin:right top;-webkit-text-stroke:0.45px #3a3a3a;">0.49</div>
<div style="position:absolute;left:151.0px;width:600px;text-align:right;top:873.9px;font-size:22px;line-height:22px;font-weight:400;color:#3a3a3a;white-space:nowrap;transform:scaleX(0.9150);transform-origin:right top;-webkit-text-stroke:0.45px #3a3a3a;">1.00</div>
<div style="position:absolute;left:441.0px;width:600px;text-align:right;top:873.9px;font-size:22px;line-height:22px;font-weight:400;color:#3a3a3a;white-space:nowrap;transform:scaleX(0.9150);transform-origin:right top;-webkit-text-stroke:0.45px #3a3a3a;">465.90</div>
<div style="position:absolute;left:732.0px;width:600px;text-align:right;top:873.9px;font-size:22px;line-height:22px;font-weight:400;color:#3a3a3a;white-space:nowrap;transform:scaleX(0.9150);transform-origin:right top;-webkit-text-stroke:0.45px #3a3a3a;">59.00</div>
<div style="position:absolute;left:1023.0px;width:600px;text-align:right;top:873.9px;font-size:22px;line-height:22px;font-weight:400;color:#3a3a3a;white-space:nowrap;transform:scaleX(0.9150);transform-origin:right top;-webkit-text-stroke:0.45px #3a3a3a;">8,567.95</div>
<div style="position:absolute;left:1314.0px;width:600px;text-align:right;top:873.9px;font-size:22px;line-height:22px;font-weight:400;color:#3a3a3a;white-space:nowrap;transform:scaleX(0.9150);transform-origin:right top;-webkit-text-stroke:0.45px #3a3a3a;">8,567.95</div>
<div style="position:absolute;left:1605.0px;width:600px;text-align:right;top:873.9px;font-size:22px;line-height:22px;font-weight:400;color:#3a3a3a;white-space:nowrap;transform:scaleX(0.9150);transform-origin:right top;-webkit-text-stroke:0.45px #3a3a3a;">8,567.95</div>
<div style="position:absolute;left:2242.0px;top:873.9px;font-size:22px;line-height:22px;font-weight:400;color:#4a4a4a;white-space:nowrap;transform:scaleX(1.0000);transform-origin:left top;-webkit-text-stroke:0.4px #4a4a4a;">Smooth</div>
<div style="position:absolute;left:33.0px;top:928.0px;font-size:22px;line-height:22px;font-weight:400;color:#3a3a3a;white-space:nowrap;transform:scaleX(0.9300);transform-origin:left top;-webkit-text-stroke:0.45px #3a3a3a;">14</div>
<div style="position:absolute;left:-227.0px;width:600px;text-align:right;top:928.0px;font-size:22px;line-height:22px;font-weight:400;color:#3a3a3a;white-space:nowrap;transform:scaleX(0.9150);transform-origin:right top;-webkit-text-stroke:0.45px #3a3a3a;">0.39</div>
<div style="position:absolute;left:151.0px;width:600px;text-align:right;top:928.0px;font-size:22px;line-height:22px;font-weight:400;color:#3a3a3a;white-space:nowrap;transform:scaleX(0.9150);transform-origin:right top;-webkit-text-stroke:0.45px #3a3a3a;">1.16</div>
<div style="position:absolute;left:441.0px;width:600px;text-align:right;top:928.0px;font-size:22px;line-height:22px;font-weight:400;color:#3a3a3a;white-space:nowrap;transform:scaleX(0.9150);transform-origin:right top;-webkit-text-stroke:0.45px #3a3a3a;">97.28</div>
<div style="position:absolute;left:732.0px;width:600px;text-align:right;top:928.0px;font-size:22px;line-height:22px;font-weight:400;color:#3a3a3a;white-space:nowrap;transform:scaleX(0.9150);transform-origin:right top;-webkit-text-stroke:0.45px #3a3a3a;">51.00</div>
<div style="position:absolute;left:1023.0px;width:600px;text-align:right;top:928.0px;font-size:22px;line-height:22px;font-weight:400;color:#3a3a3a;white-space:nowrap;transform:scaleX(0.9150);transform-origin:right top;-webkit-text-stroke:0.45px #3a3a3a;">1,865.22</div>
<div style="position:absolute;left:1314.0px;width:600px;text-align:right;top:928.0px;font-size:22px;line-height:22px;font-weight:400;color:#3a3a3a;white-space:nowrap;transform:scaleX(0.9150);transform-origin:right top;-webkit-text-stroke:0.45px #3a3a3a;">1,865.22</div>
<div style="position:absolute;left:1605.0px;width:600px;text-align:right;top:928.0px;font-size:22px;line-height:22px;font-weight:400;color:#3a3a3a;white-space:nowrap;transform:scaleX(0.9150);transform-origin:right top;-webkit-text-stroke:0.45px #3a3a3a;">1,865.22</div>
<div style="position:absolute;left:2242.0px;top:928.0px;font-size:22px;line-height:22px;font-weight:400;color:#4a4a4a;white-space:nowrap;transform:scaleX(1.0000);transform-origin:left top;-webkit-text-stroke:0.4px #4a4a4a;">Smooth</div>
<div style="position:absolute;left:33.0px;top:982.0px;font-size:22px;line-height:22px;font-weight:400;color:#3a3a3a;white-space:nowrap;transform:scaleX(0.9300);transform-origin:left top;-webkit-text-stroke:0.45px #3a3a3a;">15</div>
<div style="position:absolute;left:-227.0px;width:600px;text-align:right;top:982.0px;font-size:22px;line-height:22px;font-weight:400;color:#3a3a3a;white-space:nowrap;transform:scaleX(0.9150);transform-origin:right top;-webkit-text-stroke:0.45px #3a3a3a;">0.49</div>
<div style="position:absolute;left:151.0px;width:600px;text-align:right;top:982.0px;font-size:22px;line-height:22px;font-weight:400;color:#3a3a3a;white-space:nowrap;transform:scaleX(0.9150);transform-origin:right top;-webkit-text-stroke:0.45px #3a3a3a;">1.00</div>
<div style="position:absolute;left:441.0px;width:600px;text-align:right;top:982.0px;font-size:22px;line-height:22px;font-weight:400;color:#3a3a3a;white-space:nowrap;transform:scaleX(0.9150);transform-origin:right top;-webkit-text-stroke:0.45px #3a3a3a;">465.90</div>
<div style="position:absolute;left:732.0px;width:600px;text-align:right;top:982.0px;font-size:22px;line-height:22px;font-weight:400;color:#3a3a3a;white-space:nowrap;transform:scaleX(0.9150);transform-origin:right top;-webkit-text-stroke:0.45px #3a3a3a;">59.00</div>
<div style="position:absolute;left:1023.0px;width:600px;text-align:right;top:982.0px;font-size:22px;line-height:22px;font-weight:400;color:#3a3a3a;white-space:nowrap;transform:scaleX(0.9150);transform-origin:right top;-webkit-text-stroke:0.45px #3a3a3a;">8,567.95</div>
<div style="position:absolute;left:1314.0px;width:600px;text-align:right;top:982.0px;font-size:22px;line-height:22px;font-weight:400;color:#3a3a3a;white-space:nowrap;transform:scaleX(0.9150);transform-origin:right top;-webkit-text-stroke:0.45px #3a3a3a;">8,567.95</div>
<div style="position:absolute;left:1605.0px;width:600px;text-align:right;top:982.0px;font-size:22px;line-height:22px;font-weight:400;color:#3a3a3a;white-space:nowrap;transform:scaleX(0.9150);transform-origin:right top;-webkit-text-stroke:0.45px #3a3a3a;">8,567.95</div>
<div style="position:absolute;left:2242.0px;top:982.0px;font-size:22px;line-height:22px;font-weight:400;color:#4a4a4a;white-space:nowrap;transform:scaleX(1.0000);transform-origin:left top;-webkit-text-stroke:0.4px #4a4a4a;">Smooth</div>
<div style="position:absolute;left:33.0px;top:1036.1px;font-size:22px;line-height:22px;font-weight:400;color:#3a3a3a;white-space:nowrap;transform:scaleX(0.9300);transform-origin:left top;-webkit-text-stroke:0.45px #3a3a3a;">16</div>
<div style="position:absolute;left:-227.0px;width:600px;text-align:right;top:1036.1px;font-size:22px;line-height:22px;font-weight:400;color:#3a3a3a;white-space:nowrap;transform:scaleX(0.9150);transform-origin:right top;-webkit-text-stroke:0.45px #3a3a3a;">0.47</div>
<div style="position:absolute;left:151.0px;width:600px;text-align:right;top:1036.1px;font-size:22px;line-height:22px;font-weight:400;color:#3a3a3a;white-space:nowrap;transform:scaleX(0.9150);transform-origin:right top;-webkit-text-stroke:0.45px #3a3a3a;">1.18</div>
<div style="position:absolute;left:441.0px;width:600px;text-align:right;top:1036.1px;font-size:22px;line-height:22px;font-weight:400;color:#3a3a3a;white-space:nowrap;transform:scaleX(0.9150);transform-origin:right top;-webkit-text-stroke:0.45px #3a3a3a;">454.69</div>
<div style="position:absolute;left:732.0px;width:600px;text-align:right;top:1036.1px;font-size:22px;line-height:22px;font-weight:400;color:#3a3a3a;white-space:nowrap;transform:scaleX(0.9150);transform-origin:right top;-webkit-text-stroke:0.45px #3a3a3a;">50.00</div>
<div style="position:absolute;left:1023.0px;width:600px;text-align:right;top:1036.1px;font-size:22px;line-height:22px;font-weight:400;color:#3a3a3a;white-space:nowrap;transform:scaleX(0.9150);transform-origin:right top;-webkit-text-stroke:0.45px #3a3a3a;">7,860.94</div>
<div style="position:absolute;left:1314.0px;width:600px;text-align:right;top:1036.1px;font-size:22px;line-height:22px;font-weight:400;color:#3a3a3a;white-space:nowrap;transform:scaleX(0.9150);transform-origin:right top;-webkit-text-stroke:0.45px #3a3a3a;">7,860.94</div>
<div style="position:absolute;left:1605.0px;width:600px;text-align:right;top:1036.1px;font-size:22px;line-height:22px;font-weight:400;color:#3a3a3a;white-space:nowrap;transform:scaleX(0.9150);transform-origin:right top;-webkit-text-stroke:0.45px #3a3a3a;">7,860.94</div>
<div style="position:absolute;left:2242.0px;top:1036.1px;font-size:22px;line-height:22px;font-weight:400;color:#4a4a4a;white-space:nowrap;transform:scaleX(1.0000);transform-origin:left top;-webkit-text-stroke:0.4px #4a4a4a;">Smooth</div>
<div style="position:absolute;left:33.0px;top:1090.1px;font-size:22px;line-height:22px;font-weight:400;color:#3a3a3a;white-space:nowrap;transform:scaleX(0.9300);transform-origin:left top;-webkit-text-stroke:0.45px #3a3a3a;">17</div>
<div style="position:absolute;left:-227.0px;width:600px;text-align:right;top:1090.1px;font-size:22px;line-height:22px;font-weight:400;color:#3a3a3a;white-space:nowrap;transform:scaleX(0.9150);transform-origin:right top;-webkit-text-stroke:0.45px #3a3a3a;">0.47</div>
<div style="position:absolute;left:151.0px;width:600px;text-align:right;top:1090.1px;font-size:22px;line-height:22px;font-weight:400;color:#3a3a3a;white-space:nowrap;transform:scaleX(0.9150);transform-origin:right top;-webkit-text-stroke:0.45px #3a3a3a;">1.18</div>
<div style="position:absolute;left:441.0px;width:600px;text-align:right;top:1090.1px;font-size:22px;line-height:22px;font-weight:400;color:#3a3a3a;white-space:nowrap;transform:scaleX(0.9150);transform-origin:right top;-webkit-text-stroke:0.45px #3a3a3a;">454.69</div>
<div style="position:absolute;left:732.0px;width:600px;text-align:right;top:1090.1px;font-size:22px;line-height:22px;font-weight:400;color:#3a3a3a;white-space:nowrap;transform:scaleX(0.9150);transform-origin:right top;-webkit-text-stroke:0.45px #3a3a3a;">50.00</div>
<div style="position:absolute;left:1023.0px;width:600px;text-align:right;top:1090.1px;font-size:22px;line-height:22px;font-weight:400;color:#3a3a3a;white-space:nowrap;transform:scaleX(0.9150);transform-origin:right top;-webkit-text-stroke:0.45px #3a3a3a;">7,860.94</div>
<div style="position:absolute;left:1314.0px;width:600px;text-align:right;top:1090.1px;font-size:22px;line-height:22px;font-weight:400;color:#3a3a3a;white-space:nowrap;transform:scaleX(0.9150);transform-origin:right top;-webkit-text-stroke:0.45px #3a3a3a;">7,860.94</div>
<div style="position:absolute;left:1605.0px;width:600px;text-align:right;top:1090.1px;font-size:22px;line-height:22px;font-weight:400;color:#3a3a3a;white-space:nowrap;transform:scaleX(0.9150);transform-origin:right top;-webkit-text-stroke:0.45px #3a3a3a;">7,860.94</div>
<div style="position:absolute;left:2242.0px;top:1090.1px;font-size:22px;line-height:22px;font-weight:400;color:#4a4a4a;white-space:nowrap;transform:scaleX(1.0000);transform-origin:left top;-webkit-text-stroke:0.4px #4a4a4a;">Smooth</div>
<svg style="position:absolute;left:2504px;top:220px" width="12" height="10" viewBox="0 0 12 10"><path d="M1 9 L6 2 L11 9 Z" fill="#555"/></svg>
<div style="position:absolute;left:2505px;top:234px;width:10px;height:141px;background:#d9d9d9;border-radius:5px;"></div>
<svg style="position:absolute;left:2504px;top:1097px" width="12" height="10" viewBox="0 0 12 10"><path d="M1 1 L6 8 L11 1 Z" fill="#555"/></svg>
<div style="position:absolute;left:14px;top:1121px;width:2501px;height:27px;background:#d9e1e9;"></div>
<div style="position:absolute;left:14px;top:1121px;width:2501px;height:27px;overflow:hidden;">
<div style="position:absolute;left:19.0px;top:15.4px;font-size:22px;line-height:22px;font-weight:700;color:#111;white-space:nowrap;transform:scaleX(1.0500);transform-origin:left top;">Total</div>
<div style="position:absolute;left:-241.0px;width:600px;text-align:right;top:15.4px;font-size:22px;line-height:22px;font-weight:700;color:#111;white-space:nowrap;transform:scaleX(0.9700);transform-origin:right top;">6,543.08</div>
<div style="position:absolute;left:137.0px;width:600px;text-align:right;top:15.4px;font-size:22px;line-height:22px;font-weight:700;color:#111;white-space:nowrap;transform:scaleX(0.9700);transform-origin:right top;">8,463.23</div>
<div style="position:absolute;left:427.0px;width:600px;text-align:right;top:15.4px;font-size:22px;line-height:22px;font-weight:700;color:#111;white-space:nowrap;transform:scaleX(0.9700);transform-origin:right top;">2,494,716.00</div>
<div style="position:absolute;left:718.0px;width:600px;text-align:right;top:15.4px;font-size:22px;line-height:22px;font-weight:700;color:#111;white-space:nowrap;transform:scaleX(0.9700);transform-origin:right top;">201,783.00</div>
<div style="position:absolute;left:1009.0px;width:600px;text-align:right;top:15.4px;font-size:22px;line-height:22px;font-weight:700;color:#111;white-space:nowrap;transform:scaleX(0.9700);transform-origin:right top;">24,740,383.00</div>
<div style="position:absolute;left:1300.0px;width:600px;text-align:right;top:15.4px;font-size:22px;line-height:22px;font-weight:700;color:#111;white-space:nowrap;transform:scaleX(0.9700);transform-origin:right top;">24,740,383.00</div>
<div style="position:absolute;left:1591.0px;width:600px;text-align:right;top:15.4px;font-size:22px;line-height:22px;font-weight:700;color:#111;white-space:nowrap;transform:scaleX(0.9700);transform-origin:right top;">24,740,383.00</div>
</div>
<div style="position:absolute;left:2231px;top:11px;width:6px;height:1179.5px;background:#e2332b;"></div>
<div style="position:absolute;left:2231px;top:11px;width:318.5px;height:5.5px;background:#e2332b;"></div>
<div style="position:absolute;left:2544px;top:11px;width:5.5px;height:1179.5px;background:#e2332b;"></div>
<div style="position:absolute;left:2231px;top:1185px;width:318.5px;height:5.5px;background:#e2332b;"></div>
</div><div style="position:absolute;left:0px;top:0px;width:16px;height:8px;background:#000;"></div>
<div style="position:absolute;left:0px;top:8px;width:8px;height:8px;background:#000;"></div>
<div style="position:absolute;left:2552px;top:0px;width:6px;height:8px;background:#000;"></div>
<div style="position:absolute;left:0px;top:1192px;width:8px;height:13px;background:#000;"></div>
<div style="position:absolute;left:0px;top:1200px;width:16px;height:5px;background:#000;"></div>
<div style="position:absolute;left:2552px;top:1192px;width:6px;height:13px;background:#000;"></div>
<div style="position:absolute;left:2544px;top:1200px;width:14px;height:5px;background:#000;"></div></body></html>
